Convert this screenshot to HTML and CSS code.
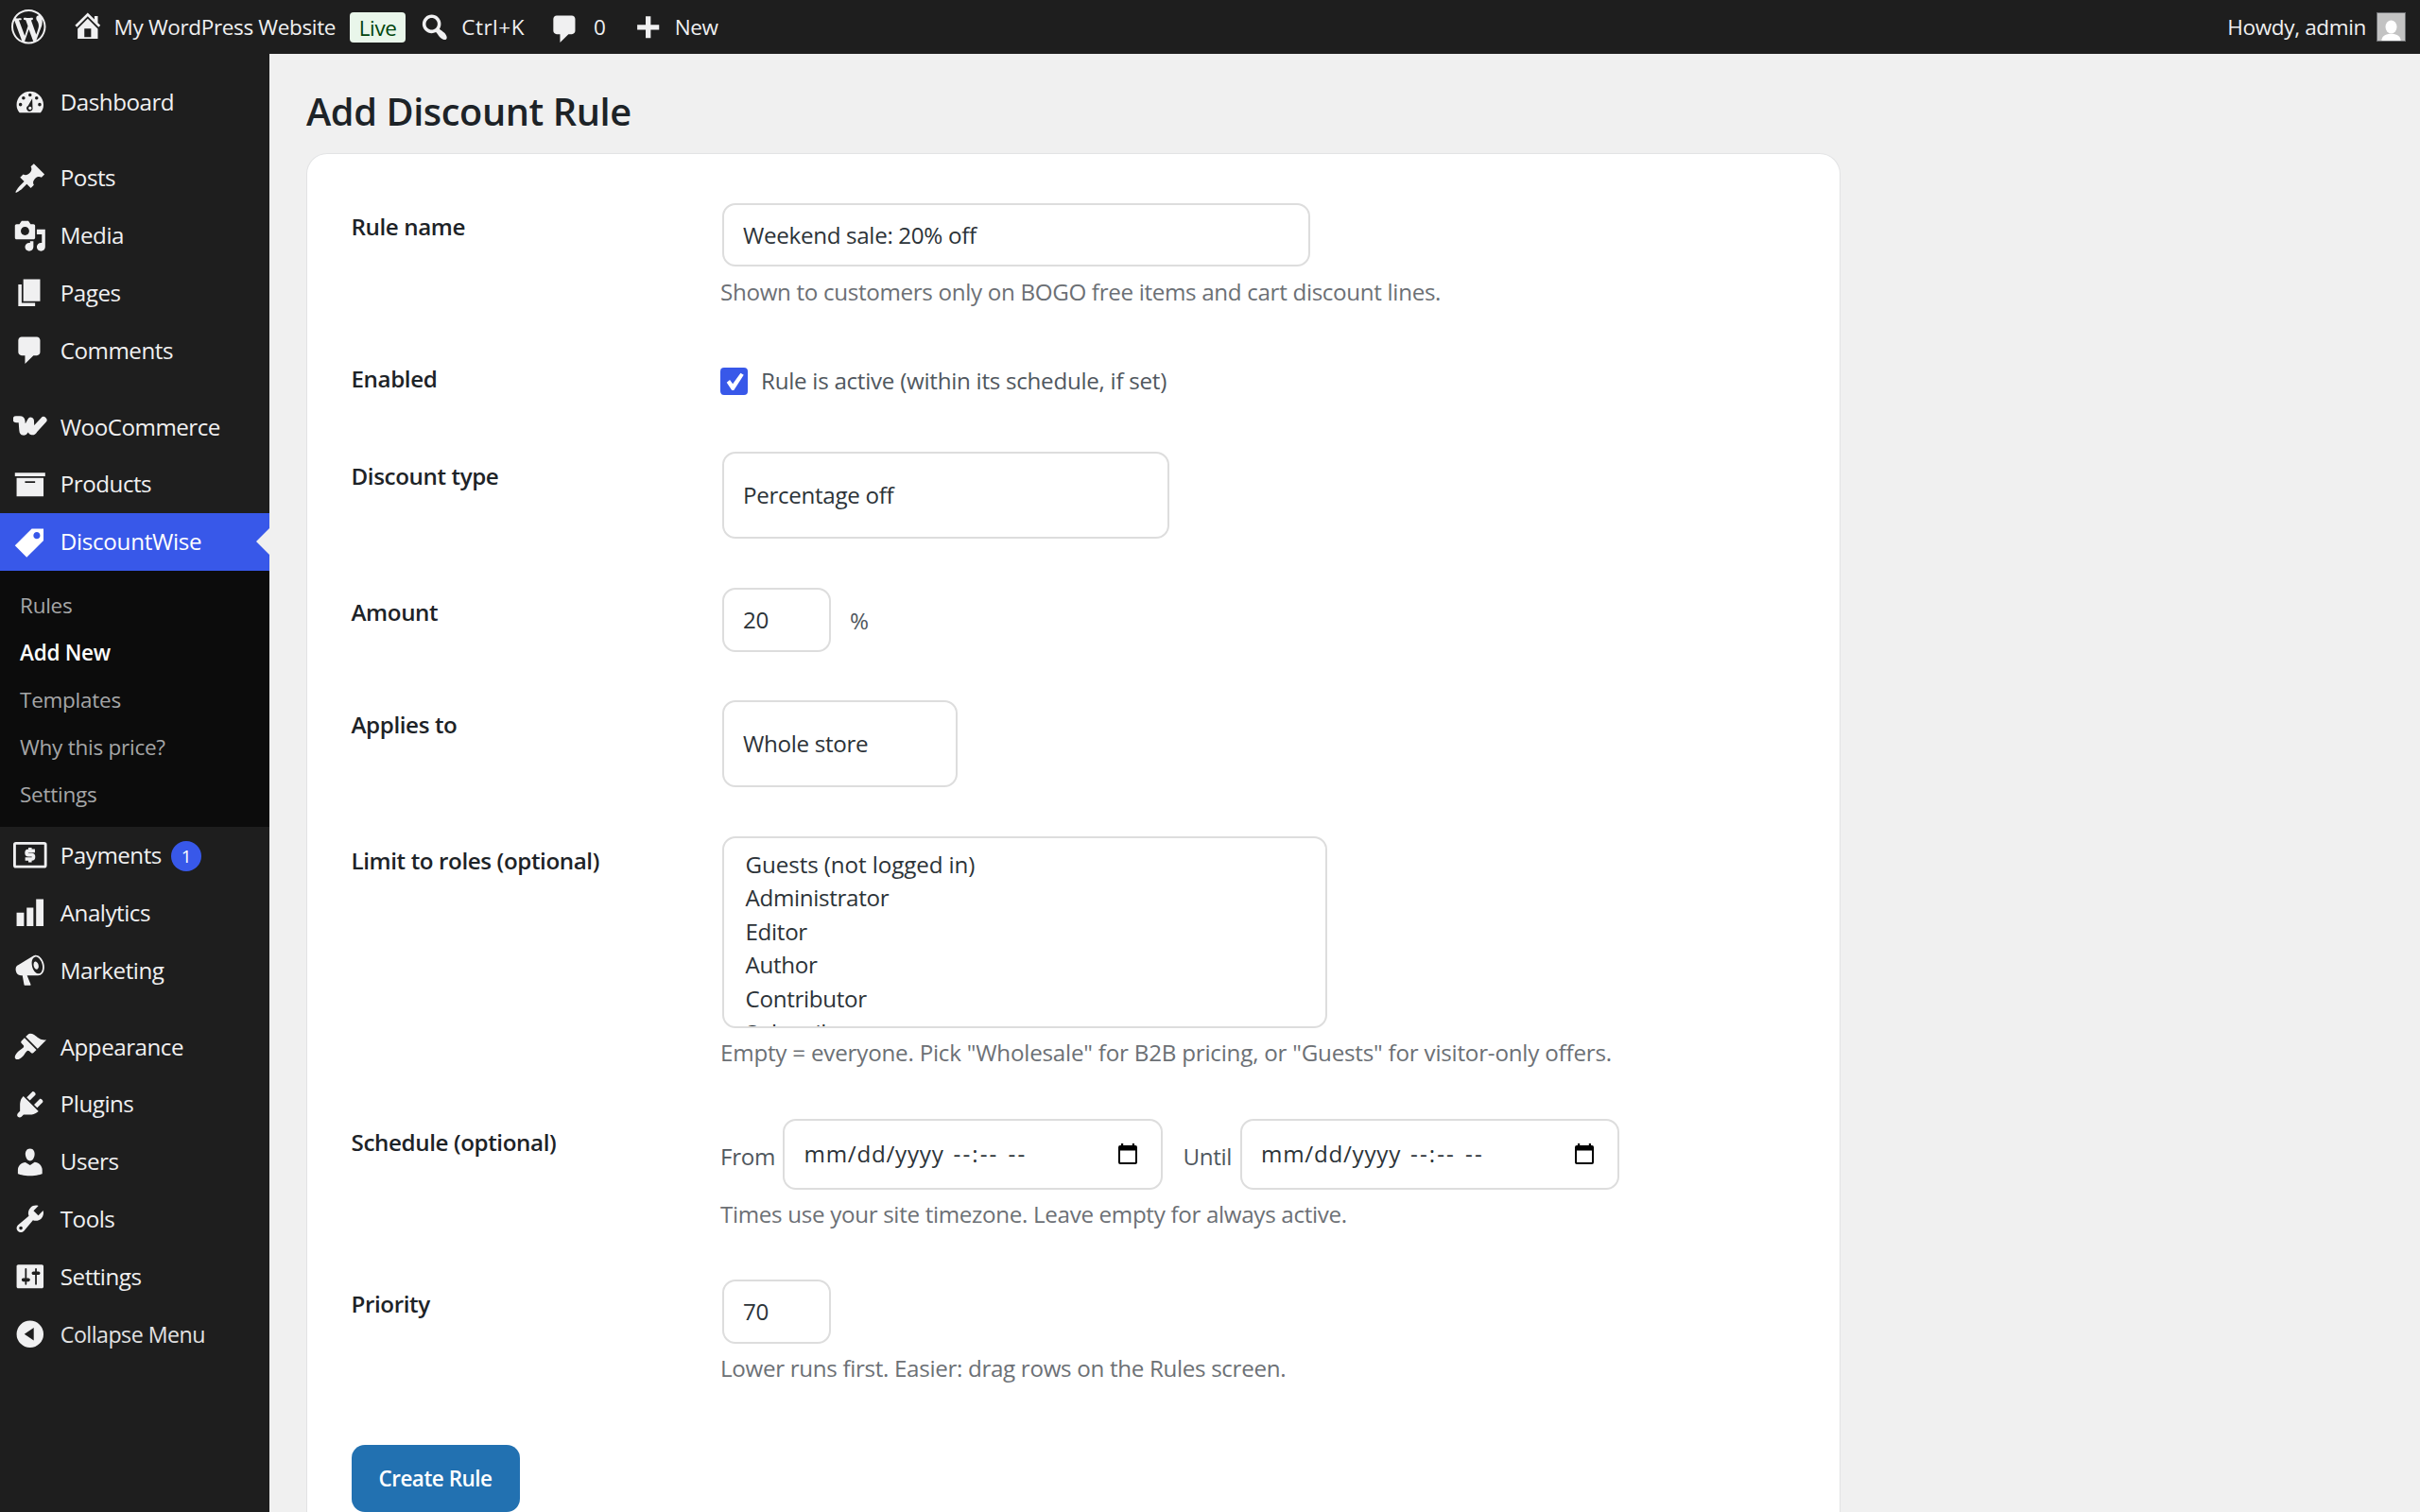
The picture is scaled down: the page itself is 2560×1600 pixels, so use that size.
FILE: index.html
```html
<!DOCTYPE html>
<html lang="en">
<head>
    <meta charset="UTF-8">
    <meta name="viewport" content="width=device-width, initial-scale=1.0">
    <title>Add Discount Rule</title>
    <link rel="stylesheet" href="styles.css">
</head>
<body>
    <!-- Admin bar -->
    <header class="adminbar">
        <svg class="icon logo" viewBox="0 0 20 20"><path d="M20 10c0-5.51-4.49-10-10-10C4.48 0 0 4.49 0 10c0 5.52 4.48 10 10 10 5.51 0 10-4.48 10-10zM7.78 15.37L4.37 6.22c.55-.02 1.17-.08 1.17-.08.5-.06.44-1.13-.06-1.11 0 0-1.45.11-2.37.11-.18 0-.37 0-.58-.01C4.12 2.69 6.87 1.11 10 1.11c2.33 0 4.45.87 6.05 2.34-.68-.11-1.65.39-1.65 1.58 0 .74.45 1.36.9 2.1.35.61.55 1.36.55 2.46 0 1.49-1.4 5-1.4 5l-3.03-8.37c.54-.02.82-.17.82-.17.5-.05.44-1.25-.06-1.22 0 0-1.44.12-2.38.12-.87 0-2.33-.12-2.33-.12-.5-.03-.56 1.2-.06 1.22l.92.08 1.26 3.41zM17.41 10c.24-.64.74-1.87.43-4.25.7 1.29 1.05 2.71 1.05 4.25 0 3.29-1.73 6.24-4.4 7.78.97-2.59 1.94-5.2 2.92-7.78zM6.1 18.09C3.12 16.65 1.11 13.53 1.11 10c0-1.3.23-2.48.72-3.59C3.25 10.3 4.67 14.2 6.1 18.09zm4.03-6.63l2.58 6.98c-.86.29-1.76.45-2.71.45-.79 0-1.57-.11-2.29-.33.81-2.38 1.62-4.74 2.42-7.1z"/></svg>
        <a class="bar-item site">
            <svg class="icon" viewBox="0 0 20 20"><path fill-rule="evenodd" d="M16 8.5l1.53 1.53-1.06 1.06L10 4.6l-6.47 6.49-1.06-1.06L10 2.5l4 4v-2h2v4zm-6-2.46l6 5.99V18H4v-5.97zM12 17v-5H8v5h4z"/></svg>
            <span>My WordPress Website</span>
        </a>
        <span class="live">Live</span>
        <a class="bar-item search">
            <svg class="icon" viewBox="0 0 20 20"><path d="M12.14 4.18c1.87 1.87 2.11 4.75.72 6.89.12.1.22.21.36.31.2.16.47.36.81.59.34.24.56.39.66.47.42.31.73.57.94.78.32.32.6.65.84 1 .25.35.44.69.59 1.04.14.35.21.68.18 1-.02.32-.14.59-.36.81s-.49.34-.81.36c-.31.02-.65-.04-.99-.19-.35-.14-.7-.34-1.04-.59-.35-.24-.68-.52-1-.84-.21-.21-.47-.52-.77-.93-.1-.13-.25-.35-.47-.66-.22-.32-.4-.57-.56-.78-.16-.2-.29-.35-.44-.5-2.07 1.09-4.69.76-6.44-.98-2.14-2.15-2.14-5.64 0-7.78 2.15-2.15 5.63-2.15 7.78 0zm-1.41 6.36c1.36-1.37 1.36-3.58 0-4.95-1.37-1.37-3.59-1.37-4.95 0-1.37 1.37-1.37 3.58 0 4.95 1.36 1.37 3.58 1.37 4.95 0z"/></svg>
            <span>Ctrl+K</span>
        </a>
        <a class="bar-item comments">
            <svg class="icon" viewBox="0 0 20 20"><path d="M5 2h9c1.1 0 2 .9 2 2v7c0 1.1-.9 2-2 2h-2l-5 5v-5H5c-1.1 0-2-.9-2-2V4c0-1.1.9-2 2-2z"/></svg>
            <span>0</span>
        </a>
        <a class="bar-item new">
            <svg class="icon" viewBox="0 0 20 20"><path d="M17 8.5v3h-5v5H9v-5H4v-3h5v-5h3v5h5z"/></svg>
            <span>New</span>
        </a>
        <a class="account">
            <span>Howdy, admin</span>
            <svg class="avatar" viewBox="0 0 30 30"><rect width="30" height="30" fill="#c3c3c3"/><ellipse cx="15" cy="15" rx="6.2" ry="7.2" fill="#fff"/><path d="M4.500 30c0-5 5-7.500 10.500-7.500s10.500 2.500 10.500 7.500z" fill="#fff"/></svg>
        </a>
    </header>

    <div class="layout">
        <!-- Side menu -->
        <nav class="menu">
            <a class="item">
                <svg class="icon" viewBox="0 0 20 20"><path fill-rule="evenodd" d="M3.760 16.500h12.480c1.100-1.370 1.760-2.800 1.760-4.700 0-4.420-3.580-8-8-8s-8 3.580-8 8c0 1.900.66 3.330 1.760 4.700zM10 4.900a1 1 0 1 1 0 2 1 1 0 0 1 0-2zM6.100 6.700a1 1 0 1 1 0 2 1 1 0 0 1 0-2zM13.900 6.700a1 1 0 1 1 0 2 1 1 0 0 1 0-2zM4.300 10.600a1 1 0 1 1 0 2 1 1 0 0 1 0-2zM15.700 10.600a1 1 0 1 1 0 2 1 1 0 0 1 0-2zM11.300 8l.2 5.400a1.800 1.800 0 1 1-2.700-1.100z"/><circle cx="10" cy="13.700" r=".9"/></svg>
                <span>Dashboard</span>
            </a>
            <a class="item gap">
                <svg class="icon" viewBox="0 0 20 20"><path d="M10.440 3.020l1.820-1.820 6.360 6.350-1.830 1.820c-1.050-.68-2.480-.57-3.410.36l-.75.75c-.92.93-1.040 2.350-.35 3.410l-1.830 1.820-2.410-2.410-2.800 2.790c-.42.42-3.380 2.710-3.800 2.290s1.860-3.390 2.280-3.810l2.790-2.790L4.100 9.360l1.830-1.820c1.050.69 2.480.57 3.400-.36l.75-.75c.93-.92 1.050-2.350.36-3.410z"/></svg>
                <span>Posts</span>
            </a>
            <a class="item">
                <svg class="icon" viewBox="0 0 20 20"><path d="M13 11V4c0-.55-.45-1-1-1h-1.670L9 1H5L3.670 3H2c-.55 0-1 .45-1 1v7c0 .55.45 1 1 1h10c.55 0 1-.45 1-1zM7 4.500c1.380 0 2.500 1.120 2.500 2.500S8.380 9.500 7 9.500 4.500 8.380 4.500 7 5.620 4.500 7 4.500zM14 6h5v10.500c0 1.380-1.120 2.500-2.500 2.500S14 17.880 14 16.500s1.120-2.500 2.500-2.500c.17 0 .34.02.5.05V9h-3V6zm-4 8.050V13h2v3.500c0 1.380-1.120 2.500-2.500 2.500S7 17.880 7 16.500 8.120 14 9.500 14c.17 0 .34.02.5.05z"/></svg>
                <span>Media</span>
            </a>
            <a class="item">
                <svg class="icon" viewBox="0 0 20 20"><path d="M6 15V2h10v13H6zm-1 1h8v2H3V5h2v11z"/></svg>
                <span>Pages</span>
            </a>
            <a class="item">
                <svg class="icon" viewBox="0 0 20 20"><path d="M5 2h9c1.100 0 2 .9 2 2v7c0 1.100-.9 2-2 2h-2l-5 5v-5H5c-1.100 0-2-.9-2-2V4c0-1.100.9-2 2-2z"/></svg>
                <span>Comments</span>
            </a>
            <a class="item gap">
                <svg class="icon stroke" viewBox="0 0 20 20"><path d="M1.700 5.500h2.200c.8 0 1.100.3 1.200 1.100l.4 5.300c.1 1.400 1 1.500 1.700.3L10.400 6.200l.2 5.400c.1 1.500 1.100 1.700 1.900.3L18 5.900" stroke-width="3.900"/></svg>
                <span>WooCommerce</span>
            </a>
            <a class="item">
                <svg class="icon" viewBox="0 0 20 20"><path d="M19 3v2H1V3h18zM2 6h16v11H2V6zm11 3V8H7v1h6z"/></svg>
                <span>Products</span>
            </a>
            <a class="item current">
                <svg class="icon" viewBox="0 0 20 20"><path d="M11 2h7v7L8 19l-7-7zm3 6c1.100 0 2-.9 2-2s-.9-2-2-2-2 .9-2 2 .9 2 2 2z"/></svg>
                <span>DiscountWise</span>
            </a>
            <div class="submenu">
                <a>Rules</a>
                <a class="active">Add New</a>
                <a>Templates</a>
                <a>Why this price?</a>
                <a>Settings</a>
            </div>
            <a class="item">
                <svg class="icon stroke" viewBox="0 0 20 20"><rect x=".8" y="3" width="18.400" height="13.900" rx=".8" stroke-width="1.600"/><path d="M12.900 7.500H9.100q-1.200 0-1.200 1.200t1.200 1.200h1.800q1.200 0 1.200 1.200t-1.200 1.300H7.100M10 5.600v1.900M10 12.400v1.900" stroke-width="2" stroke-linecap="butt"/></svg>
                <span>Payments</span>
                <span class="count">1</span>
            </a>
            <a class="item">
                <svg class="icon" viewBox="0 0 20 20"><path d="M18 18V2h-4.400v16H18zm-6 0V7H8v11h4zm-5.600 0v-8H2v8h4.400z"/></svg>
                <span>Analytics</span>
            </a>
            <a class="item">
                <svg class="icon" viewBox="0 0 20 20"><path fill-rule="evenodd" d="M18.150 5.940c.46 1.620.38 3.220-.02 4.480-.42 1.280-1.260 2.180-2.300 2.480-.16.06-.26.06-.4.06-.06.02-.12.02-.18.02-.06.02-.14.02-.22.02h-6.800l2.220 5.500c.02.14-.06.26-.14.34-.08.1-.24.16-.34.16H6.950c-.1 0-.26-.06-.34-.16-.08-.08-.16-.2-.14-.34l-1-5.500H4.250l-.02-.02c-.5.06-1.080-.18-1.540-.62s-.88-1.080-1.060-1.880c-.24-.8-.2-1.560-.02-2.200.18-.62.58-1.080 1.060-1.300l.02-.02 9-5.400c.1-.06.18-.1.24-.16.06-.04.14-.08.24-.12.16-.08.28-.12.5-.18 1.040-.3 2.240.1 3.220.98s1.840 2.240 2.260 3.860zm-2.580 5.980h-.02c.4-.1.74-.34 1.040-.7.58-.7.86-1.760.86-3.040 0-.64-.1-1.300-.28-1.980-.34-1.360-1.020-2.500-1.780-3.240s-1.680-1.100-2.460-.88c-.82.22-1.400.96-1.700 2-.32 1.040-.28 2.360.06 3.720.38 1.360 1 2.500 1.800 3.240.78.74 1.620 1.100 2.480.88z"/><path d="M13.030 4.840c.22-.04.42-.02.62.04.38.16.76.48 1.020 1s.42 1.200.42 1.780c0 .3-.04.56-.12.8-.18.48-.44.84-.86.94-.34.1-.8-.06-1.140-.4s-.64-.86-.78-1.500c-.18-.62-.12-1.240.02-1.720s.48-.84.82-.94z"/></svg>
                <span>Marketing</span>
            </a>
            <a class="item gap">
                <svg class="icon" viewBox="0 0 20 20"><path d="M14.480 11.060L7.410 3.990l1.500-1.500c.5-.56 2.300-.47 3.510.32 1.210.8 1.430 1.280 2.910 2.100 1.180.64 2.450 1.260 4.450.85zm-.71.71L6.700 4.700 4.930 6.470c-.39.39-.39 1.020 0 1.410l1.060 1.060c.39.39.39 1.030 0 1.420-.6.6-1.430 1.110-2.210 1.690-.35.26-.7.53-1.010.84C1.430 14.230.4 16.080 1.400 17.070c.99 1 2.840-.03 4.180-1.360.31-.31.58-.66.85-1.020.57-.78 1.080-1.610 1.690-2.210.39-.39 1.020-.39 1.410 0l1.060 1.060c.39.39 1.020.39 1.410 0z"/></svg>
                <span>Appearance</span>
            </a>
            <a class="item">
                <svg class="icon" viewBox="0 0 20 20"><path d="M13.110 4.360L9.870 7.600 8 5.730l3.240-3.240c.35-.34 1.050-.2 1.560.32.52.51.66 1.210.31 1.550zm-8 1.770l.91-1.120 9.010 9.010-1.190.84c-.71.71-2.630 1.160-3.820 1.160H6.140L4.900 17.260c-.59.59-1.540.59-2.120 0-.59-.58-.59-1.530 0-2.120l1.240-1.240v-3.880c0-1.130.4-3.190 1.090-3.890zm7.260 3.970l3.240-3.240c.34-.35 1.040-.21 1.550.31.52.51.66 1.210.31 1.550l-3.240 3.250z"/></svg>
                <span>Plugins</span>
            </a>
            <a class="item">
                <svg class="icon" viewBox="0 0 20 20"><path d="M10 9.250c-2.270 0-2.730-3.440-2.730-3.440C7 4.020 7.820 2 9.970 2c2.160 0 2.980 2.020 2.710 3.810 0 0-.41 3.440-2.680 3.440zm0 2.570L12.720 10c2.390 0 4.520 2.330 4.520 4.530v2.490s-3.650 1.130-7.240 1.130c-3.650 0-7.240-1.130-7.240-1.130v-2.490c0-2.250 1.940-4.480 4.470-4.480z"/></svg>
                <span>Users</span>
            </a>
            <a class="item">
                <svg class="icon" viewBox="0 0 20 20"><path d="M16.680 9.770c-1.340 1.340-3.300 1.670-4.950.99l-5.410 6.520c-.99.99-2.590.99-3.580 0s-.99-2.590 0-3.570l6.520-5.420c-.68-1.650-.35-3.610.99-4.950 1.280-1.280 3.120-1.620 4.720-1.060l-2.890 2.890 2.820 2.820 2.860-2.870c.53 1.580.18 3.390-1.080 4.650zM3.810 16.210c.4.39 1.040.39 1.430 0 .4-.4.4-1.040 0-1.430-.39-.4-1.030-.4-1.430 0-.39.39-.39 1.030 0 1.430z"/></svg>
                <span>Tools</span>
            </a>
            <a class="item">
                <svg class="icon" viewBox="0 0 20 20"><path d="M18 16V4c0-.55-.45-1-1-1H3c-.55 0-1 .45-1 1v12c0 .55.45 1 1 1h14c.55 0 1-.45 1-1zM8 11h1c.55 0 1 .45 1 1s-.45 1-1 1H8v1.500c0 .28-.22.5-.5.5s-.5-.22-.5-.5V13H6c-.55 0-1-.45-1-1s.45-1 1-1h1V5.500c0-.28.22-.5.5-.5s.5.22.5.5V11zm5-2h-1c-.55 0-1-.45-1-1s.45-1 1-1h1V5.500c0-.28.22-.5.5-.5s.5.22.5.5V7h1c.55 0 1 .45 1 1s-.45 1-1 1h-1v5.500c0 .28-.22.5-.5.5s-.5-.22-.5-.5V9z"/></svg>
                <span>Settings</span>
            </a>
            <a class="item collapse">
                <svg class="icon" viewBox="0 0 20 20"><path fill-rule="evenodd" d="M10 2a8 8 0 1 1 0 16 8 8 0 0 1 0-16zM12.200 6.200v7.600L6.600 10z"/></svg>
                <span>Collapse Menu</span>
            </a>
        </nav>

        <main class="content">
            <h1>Add Discount Rule</h1>
            <form class="card">
                <div class="rows">
                    <div class="row">
                        <label>Rule name</label>
                        <div class="field">
                            <input class="control name" type="text" value="Weekend sale: 20% off">
                            <p class="help">Shown to customers only on BOGO free items and cart discount lines.</p>
                        </div>
                    </div>
                    <div class="row">
                        <label>Enabled</label>
                        <div class="field check-line">
                            <span class="checkbox"><svg viewBox="0 0 28 28"><path d="M6.500 15.200l3.200-2.700 3 4.200L20.700 5.600l3.200 1.800L13.800 23.200h-2z"/></svg></span>
                            <span>Rule is active (within its schedule, if set)</span>
                        </div>
                    </div>
                    <div class="row">
                        <label>Discount type</label>
                        <div class="field">
                            <select class="control select type"><option>Percentage off</option></select>
                        </div>
                    </div>
                    <div class="row">
                        <label>Amount</label>
                        <div class="field inline">
                            <input class="control small" type="text" value="20">
                            <span class="unit">%</span>
                        </div>
                    </div>
                    <div class="row">
                        <label>Applies to</label>
                        <div class="field">
                            <select class="control select scope"><option>Whole store</option></select>
                        </div>
                    </div>
                    <div class="row">
                        <label>Limit to roles (optional)</label>
                        <div class="field">
                            <ul class="control roles">
                                <li>Guests (not logged in)</li>
                                <li>Administrator</li>
                                <li>Editor</li>
                                <li>Author</li>
                                <li>Contributor</li>
                                <li>Subscriber</li>
                            </ul>
                            <p class="help wide">Empty = everyone. Pick "Wholesale" for B2B pricing, or "Guests" for visitor-only offers.</p>
                        </div>
                    </div>
                    <div class="row">
                        <label>Schedule (optional)</label>
                        <div class="field">
                            <div class="inline">
                                <span class="when from">From</span>
                                <div class="control date">
                                    <span class="day">mm/dd/yyyy</span><span class="time">--:--</span><span class="ampm">--</span>
                                    <svg viewBox="0 0 20 22"><path fill-rule="evenodd" d="M3 0h2.200v2h9.600V0H17v2h1q2 0 2 2v16q0 2-2 2H2q-2 0-2-2V4q0-2 2-2h1zM2 7.500V20h16V7.500z"/></svg>
                                </div>
                                <span class="when until">Until</span>
                                <div class="control date">
                                    <span class="day">mm/dd/yyyy</span><span class="time">--:--</span><span class="ampm">--</span>
                                    <svg viewBox="0 0 20 22"><path fill-rule="evenodd" d="M3 0h2.200v2h9.600V0H17v2h1q2 0 2 2v16q0 2-2 2H2q-2 0-2-2V4q0-2 2-2h1zM2 7.500V20h16V7.500z"/></svg>
                                </div>
                            </div>
                            <p class="help">Times use your site timezone. Leave empty for always active.</p>
                        </div>
                    </div>
                    <div class="row">
                        <label>Priority</label>
                        <div class="field">
                            <input class="control small" type="text" value="70">
                            <p class="help">Lower runs first. Easier: drag rows on the Rules screen.</p>
                        </div>
                    </div>
                </div>
                <button class="submit" type="button">Create Rule</button>
            </form>
        </main>
    </div>
</body>
</html>
```
FILE: styles.css
```css
* {
    box-sizing: border-box;
}

body {
    margin: 0;
    height: 1600px;
    overflow: hidden;
    background: #f0f0f0;
    color: #1d2327;
    font-family: "Open Sans", "Noto Sans", sans-serif;
    font-size: 24.2px;
    letter-spacing: -0.33px;
    line-height: 32px;
}

.icon {
    width: 35.6px;
    height: 35.6px;
    fill: #f0f0f1;
    flex: none;
}

.icon.stroke {
    fill: none;
    stroke: #f0f0f1;
    stroke-linecap: round;
    stroke-linejoin: round;
}

/* Admin bar */
.adminbar {
    display: flex;
    align-items: center;
    height: 57px;
    padding: 0 15px 0 12px;
    background: #1e1e1e;
    color: #f0f0f1;
    font-size: 22.5px;
    letter-spacing: -0.35px;
}

.adminbar .logo {
    width: 36.5px;
    height: 36.5px;
}

.bar-item,
.account {
    display: flex;
    align-items: center;
}

.site {
    margin-left: 26px;
    gap: 10.5px;
}

.site .icon {
    margin-top: -4px;
}

.live {
    margin-left: 15px;
    width: 59px;
    height: 32px;
    border-radius: 4px;
    background: #e9f6ea;
    color: #00450c;
    font-weight: 500;
    text-align: center;
    line-height: 33px;
}

.search {
    margin-left: 13px;
    gap: 10.5px;
    letter-spacing: 0.5px;
}

.comments {
    margin-left: 25.5px;
    gap: 12px;
}

.comments .icon {
    margin-top: 4px;
}

.new {
    margin-left: 26px;
    gap: 11.5px;
}

.account {
    margin-left: auto;
    gap: 11px;
}

.avatar {
    width: 31px;
    height: 31px;
    border: 1px solid #6b6d70;
}

/* Side menu */
.layout {
    display: flex;
    align-items: flex-start;
}

.menu {
    width: 284.5px;
    height: 1543px;
    flex: none;
    padding-top: 20.5px;
    background: #1e1e1e;
    color: #f0f0f1;
    letter-spacing: -0.5px;
}

.item {
    display: flex;
    align-items: center;
    gap: 14px;
    height: 60.9px;
    padding-left: 14.2px;
    position: relative;
}

.item.gap {
    margin-top: 19.6px;
}

.current {
    background: #3858e9;
    color: #fff;
    letter-spacing: -0.3px;
}

.current .icon {
    fill: #fff;
}

/* Notch that points at the page */
.current::after {
    content: "";
    position: absolute;
    right: 0;
    top: 16px;
    border: 14.2px solid transparent;
    border-left: 0;
    border-right-color: #f0f0f0;
}

.collapse {
    font-size: 23.2px;
    color: #e2e2e3;
}

.submenu {
    display: flex;
    flex-direction: column;
    height: 271px;
    padding: 12.5px 0 0 21px;
    background: #0c0c0c;
    color: #a5a6a7;
    font-size: 22.5px;
    letter-spacing: -0.25px;
    line-height: 49.8px;
}

.submenu .active {
    color: #fff;
    font-weight: 600;
}

.count {
    width: 32px;
    height: 32px;
    margin-left: -4px;
    margin-top: 2px;
    border-radius: 50%;
    background: #3858e9;
    color: #fff;
    font-size: 19px;
    text-align: center;
}

/* Page */
.content {
    padding: 35px 0 0 39.5px;
}

h1 {
    margin: 0 0 17.5px;
    font-size: 39.75px;
    font-weight: 600;
    letter-spacing: -0.42px;
    line-height: 52px;
}

.card {
    width: 1623px;
    height: 1438.5px;
    padding: 52px 46.5px 0;
    border: 1.5px solid #e2e3e4;
    border-bottom: 0;
    border-radius: 22px 22px 0 0;
    background: #fff;
}

.rows {
    display: grid;
    grid-template-rows: 160.5px 103px 144px 119px 144px 298.5px 170.5px 175px;
}

.row {
    display: grid;
    grid-template-columns: 390.5px 1fr;
}

label {
    padding-top: 9.6px;
    font-weight: 600;
    letter-spacing: -0.4px;
}

.field {
    color: #50575e;
}

.inline {
    display: flex;
    align-items: center;
}

.row .field.inline {
    align-items: flex-start;
}

.control {
    display: block;
    height: 67.5px;
    margin: 0 0 0 2px;
    padding: 0 20px;
    border: 2px solid #dddddd;
    border-radius: 14px;
    background: #fff;
    color: #2c3338;
    font: inherit;
    letter-spacing: inherit;
}

.name {
    width: 622px;
}

.small {
    width: 115px;
}

.select {
    appearance: none;
    height: 92px;
}

.type {
    width: 472.5px;
}

.scope {
    width: 248.5px;
}

/* The last role is cut by the bottom edge, as in a scrolled list box */
.roles {
    width: 640px;
    height: 202.5px;
    padding: 9.5px 22.5px;
    overflow: hidden;
    line-height: 35.65px;
    list-style: none;
}

.roles li:first-child {
    letter-spacing: -0.1px;
}

.help {
    margin: 10.5px 0 0;
    color: #6c7075;
}

.help.wide {
    letter-spacing: -0.22px;
}

.check-line {
    display: flex;
    gap: 14px;
    padding-top: 12px;
    letter-spacing: -0.28px;
}

.checkbox {
    width: 29px;
    height: 29px;
    margin-top: 1.5px;
    border-radius: 4px;
    background: #3858e9;
}

.checkbox svg {
    display: block;
    fill: #fff;
}

.unit {
    margin-left: 20px;
    line-height: 69px;
}

.when {
    padding-top: 5px;
}

.from {
    width: 64px;
}

.until {
    width: 58px;
    margin-left: 22px;
}

.date {
    display: flex;
    align-items: center;
    width: 401.5px;
    height: 75px;
    padding: 0 25px 0 20.5px;
}

.day {
    width: 158px;
    letter-spacing: 0.75px;
}

.time {
    width: 58px;
    letter-spacing: 2.1px;
}

.ampm {
    letter-spacing: 2.1px;
}

.date svg {
    width: 20px;
    height: 22px;
    margin-left: auto;
    fill: #000;
}

.submit {
    width: 178px;
    height: 71px;
    border: 0;
    border-radius: 14px;
    background: #2271b1;
    color: #fff;
    font: 600 22.5px "Open Sans", "Noto Sans", sans-serif;
    letter-spacing: -0.5px;
}
```
